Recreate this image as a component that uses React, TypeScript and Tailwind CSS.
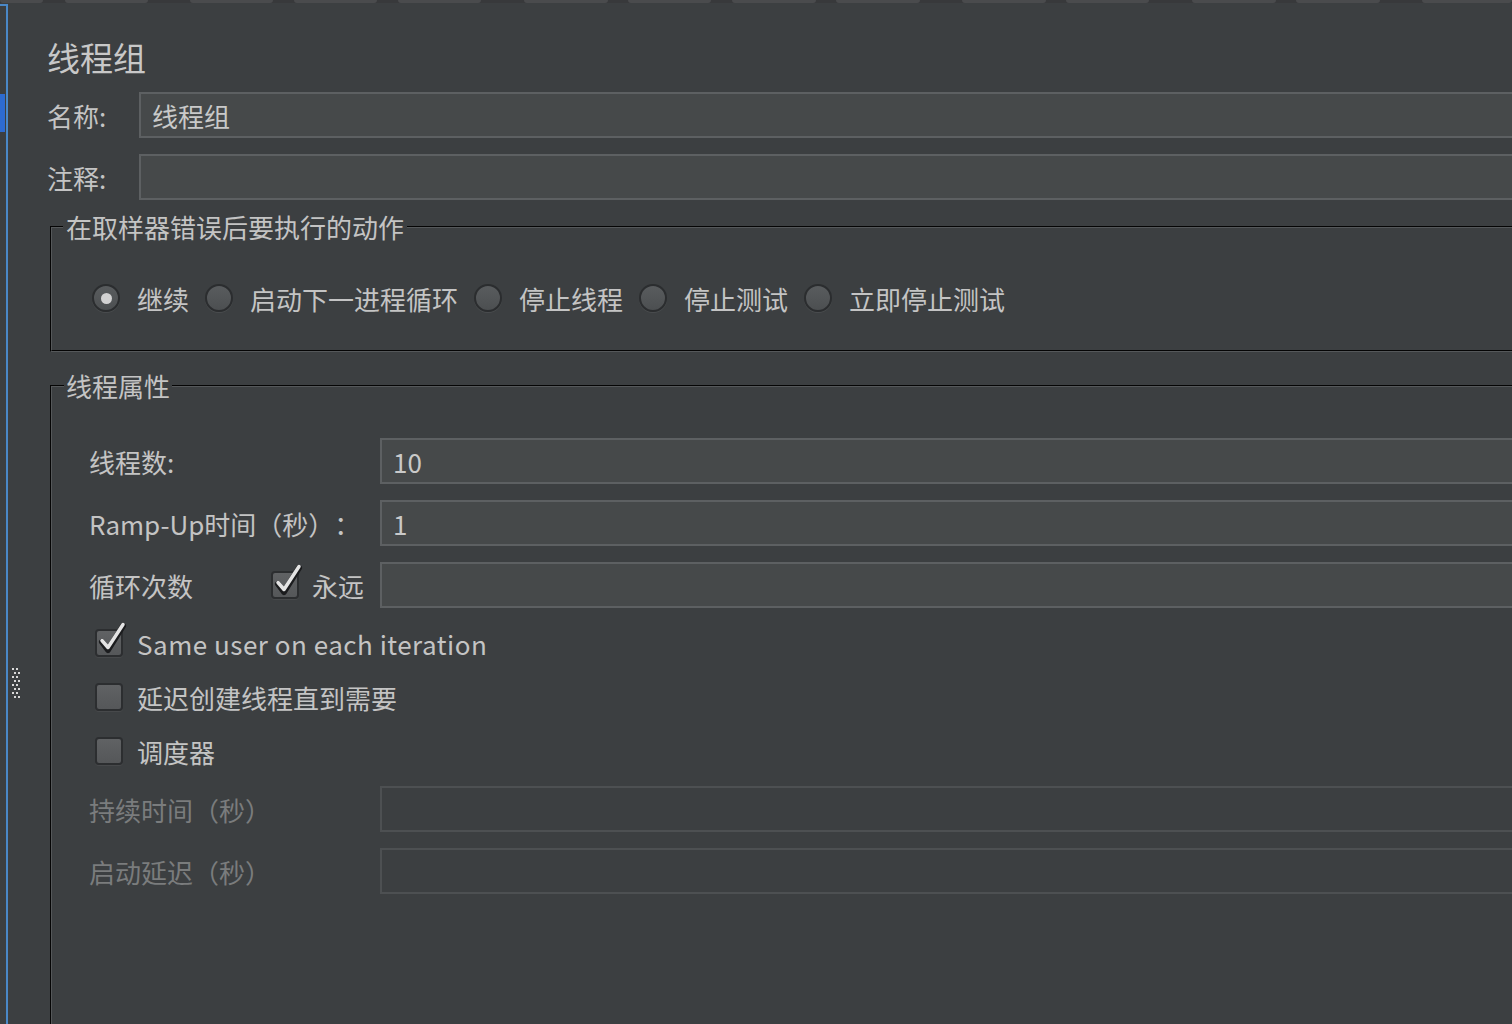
import type { ReactNode } from 'react'

// Bottom edges of the toolbar buttons that peek in along the top of the frame.
const TOOLBAR_STUBS = [
  'w-[43px]',
  'ml-[22px] w-[83px]',
  'ml-[42px] w-[83px]',
  'ml-[21px] w-[83px]',
  'ml-[21px] w-[83px]',
  'ml-[43px] w-[84px]',
  'ml-[20px] w-[83px]',
  'ml-[21px] w-[84px]',
  'ml-[20px] w-[84px]',
  'ml-[42px] w-[84px]',
  'ml-[20px] w-[83px]',
  'ml-[43px] w-[84px]',
  'ml-[20px] w-[84px]',
  'ml-[42px] w-[90px]',
]

function Radio({ label, checked = false }: { label: string; checked?: boolean }) {
  return (
    <label className="flex items-center gap-[17px]">
      <span className="flex size-[28px] shrink-0 items-center justify-center rounded-full border-2 border-[#2b2d2f] bg-[linear-gradient(#595c5e,#4c4f51)] shadow-[0_1px_0_#4a4d4f]">
        {checked && <span className="mt-[1px] size-[11px] rounded-full bg-[#d2d2d2]" />}
      </span>
      <span>{label}</span>
    </label>
  )
}

function CheckBox({ checked = false }: { checked?: boolean }) {
  return (
    <span className="relative size-[28px] shrink-0 rounded-[4px] border-2 border-[#2c2e30] bg-[linear-gradient(#606264,#555759)] shadow-[0_1px_0_#47494b]">
      {checked && (
        <svg
          className="absolute -top-[7px] -left-[2px] overflow-visible"
          width="30"
          height="30"
          viewBox="0 0 30 30"
          aria-hidden
        >
          <path d="M7 18 L13 26 L28 2" fill="none" stroke="#1b1c1e" strokeWidth="6" strokeLinecap="round" strokeLinejoin="round" />
          <path d="M7 16.5 L13 23.5 L28 0.5" fill="none" stroke="#e4e4e4" strokeWidth="3.5" strokeLinecap="round" strokeLinejoin="round" />
        </svg>
      )}
    </span>
  )
}

function Field({ value = '', disabled = false }: { value?: string; disabled?: boolean }) {
  return (
    <div
      className={
        disabled
          ? 'flex h-[46px] flex-1 items-center border-2 border-r-0 border-[#4d5052] bg-[#3c3f41] pl-[11px]'
          : 'flex h-[46px] flex-1 items-center border-2 border-r-0 border-[#5d6062] bg-[#46494a] pl-[11px] text-[#c9c9c9]'
      }
    >
      {value}
    </div>
  )
}

function PropRow({ label, children, disabled = false }: { label: ReactNode; children: ReactNode; disabled?: boolean }) {
  return (
    <div className="flex h-[46px] items-center">
      <div className={disabled ? 'flex w-[291px] items-center text-[#7a7c7d]' : 'flex w-[291px] items-center'}>
        {label}
      </div>
      {children}
    </div>
  )
}

function CheckRow({ label, checked = false, latin = false }: { label: string; checked?: boolean; latin?: boolean }) {
  return (
    <div className="flex h-[54px] items-center gap-[14px] pl-[6px]">
      <CheckBox checked={checked} />
      <span className={latin ? 'tracking-[0.5px]' : ''}>{label}</span>
    </div>
  )
}

// Little dotted splitter grip on the left edge.
function Grip() {
  const dots = []
  for (let r = 0; r < 8; r++) {
    for (let c = 0; c < 2; c++) {
      const x = c * 4 + (r % 2) * 2
      dots.push(<rect key={`${r}-${c}`} x={x} y={r * 4} width="2" height="2" fill="#d8d8d8" />)
    }
  }
  return (
    <svg width="8" height="32" viewBox="0 0 8 32" aria-hidden>
      {dots}
    </svg>
  )
}

export default function App() {
  return (
    <div className="flex h-[1024px] w-[1512px] flex-col overflow-hidden bg-[#3c3f41] font-['Noto_Sans_CJK_SC','Noto_Sans',sans-serif] text-[26px] text-[#c4c4c4] [text-spacing-trim:space-all]">
      {/* toolbar remnant */}
      <div className="flex h-[12px] bg-[#38393b]">
        {TOOLBAR_STUBS.map((cls, i) => (
          <div key={i} className={'h-[3px] shrink-0 rounded-b-[4px] bg-[#4a4b4d] ' + cls} />
        ))}
      </div>
      <div className="h-[2px] bg-[#1c1d1f]" />

      <div className="flex flex-1">
        {/* selection gutter */}
        <div className="mt-[1px] w-[8px] shrink-0 border-t-2 border-r-2 border-[#4a88c7]">
          <div className="mt-[88px] h-[38px] w-[5px] bg-[#2d6bd0]" />
        </div>
        <div className="w-[39px] shrink-0 pl-[4px] pt-[665px]">
          <Grip />
        </div>

        <div className="flex flex-1 flex-col">
          <h1 className="mt-[32px] text-[33px] leading-[44px] text-[#c8c8c8]">线程组</h1>

          <div className="mt-[13px] flex h-[46px] items-center">
            <span className="w-[92px] shrink-0">名称:</span>
            <Field value="线程组" />
          </div>
          <div className="mt-[16px] flex h-[46px] items-center">
            <span className="w-[92px] shrink-0">注释:</span>
            <Field />
          </div>

          <fieldset className="mt-[9px] ml-[3px] border-2 border-r-0 border-[#55585a] pb-[34px] [border-style:groove]">
            <legend className="ml-[11px] px-[3px] leading-[36px]">在取样器错误后要执行的动作</legend>
            <div className="mt-[35px] flex h-[36px] items-center gap-[16px] pl-[40px]">
              <Radio label="继续" checked />
              <Radio label="启动下一进程循环" />
              <Radio label="停止线程" />
              <Radio label="停止测试" />
              <Radio label="立即停止测试" />
            </div>
          </fieldset>

          <fieldset className="mt-[16px] ml-[3px] min-h-[700px] border-2 border-r-0 border-[#55585a] [border-style:groove]">
            <legend className="ml-[12px] px-[2px] leading-[36px]">线程属性</legend>
            <div className="mt-[34px] flex flex-col pl-[37px]">
              <PropRow label="线程数:">
                <Field value="10" />
              </PropRow>
              <div className="mt-[16px]">
                <PropRow label="Ramp-Up时间（秒）：">
                  <Field value="1" />
                </PropRow>
              </div>
              <div className="mt-[16px]">
                <PropRow
                  label={
                    <>
                      <span className="flex-1">循环次数</span>
                      <CheckBox checked />
                      <span className="ml-[13px] pr-[16px]">永远</span>
                    </>
                  }
                >
                  <Field />
                </PropRow>
              </div>
              <div className="mt-[8px]">
                <CheckRow label="Same user on each iteration" checked latin />
                <CheckRow label="延迟创建线程直到需要" />
                <CheckRow label="调度器" />
              </div>
              <div className="mt-[8px]">
                <PropRow label="持续时间（秒）" disabled>
                  <Field disabled />
                </PropRow>
              </div>
              <div className="mt-[16px]">
                <PropRow label="启动延迟（秒）" disabled>
                  <Field disabled />
                </PropRow>
              </div>
            </div>
          </fieldset>
        </div>
      </div>
    </div>
  )
}
